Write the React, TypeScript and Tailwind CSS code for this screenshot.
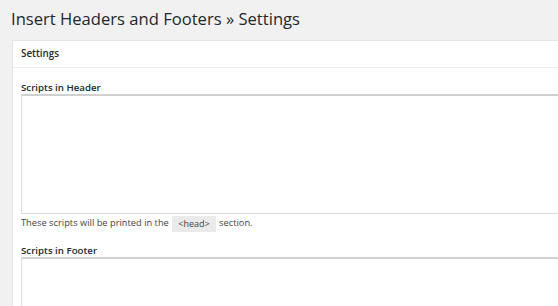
export default function App() {
  return (
    <div className="w-[558px] h-[306px] overflow-hidden bg-[#f1f1f1]" style={{ fontFamily: '"Open Sans", "Noto Sans", sans-serif' }}>
      <h1 className="pl-[11px] pt-[7px] text-[16.6px] leading-[24px] text-[#23282d] font-normal whitespace-nowrap">
        Insert Headers and Footers » Settings
      </h1>
      <div className="ml-[12px] mt-[9px] w-[600px] bg-white border border-[#e2e4e7]">
        <div className="h-[27px] pl-[8px] flex items-center border-b border-[#eeeeee] text-[9.8px] font-semibold text-[#23282d]">
          Settings
        </div>
        <div className="pl-[8px] pt-[14px]">
          <div className="text-[9.7px] font-semibold text-[#23282d] leading-[12px]">Scripts in Header</div>
          <div className="h-[120px] border border-[#dddddd] border-t-[#d0d0d0] border-t-[2px] bg-white" />
          <div className="text-[9.3px] leading-[18px] text-[#444]">
            These scripts will be printed in the{" "}
            <code className="inline-block mx-[1px] px-[6px] h-[16px] leading-[16px] align-middle bg-[#eaeaea] text-[9px]" style={{ fontFamily: '"Open Sans", sans-serif' }}>&lt;head&gt;</code>{" "}
            section.
          </div>
          <div className="mt-[13px] text-[9.7px] font-semibold text-[#23282d] leading-[12px]">Scripts in Footer</div>
          <div className="h-[120px] border border-[#dddddd] border-t-[#d0d0d0] border-t-[2px] bg-white" />
        </div>
      </div>
    </div>
  );
}
